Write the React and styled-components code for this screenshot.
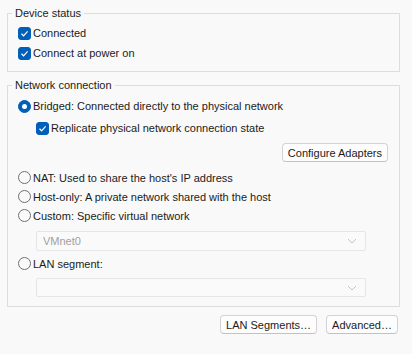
import React, { useState } from "react";
import styled, { createGlobalStyle } from "styled-components";

const Global = createGlobalStyle`
  body {
    margin: 0;
    background: #f9f9f9;
    font-family: "Liberation Sans", Arial, sans-serif;
    font-size: 11px;
    color: #1b1b1b;
  }
`;

const Page = styled.div`
  width: 412px;
  height: 354px;
  box-sizing: border-box;
  padding: 5px 12px 0 7px;
  display: flex;
  flex-direction: column;
`;

const Group = styled.fieldset`
  margin: ${p => p.$top || 0}px 0 0 0;
  border: 1px solid #dddddd;
  border-radius: 0;
  padding: ${p => p.$pad};
  display: flex;
  flex-direction: column;
  min-width: 0;
`;

const Legend = styled.legend`
  padding: 0 3px;
  margin-left: -6px;
  line-height: 16px;
  color: #1b1b1b;
`;

const Row = styled.label`
  display: flex;
  align-items: center;
  gap: 2px;
  height: ${p => p.$h || 20}px;
  margin-top: ${p => p.$mt || 0}px;
  margin-left: ${p => p.$indent || 0}px;
  line-height: 16px;
  white-space: nowrap;
`;

const Box = styled.span`
  width: 13px;
  height: 13px;
  box-sizing: border-box;
  border-radius: 3px;
  background: ${p => (p.$on ? "#005fb8" : "#fdfdfd")};
  border: 1px solid ${p => (p.$on ? "#005fb8" : "#767676")};
  display: flex;
  align-items: center;
  justify-content: center;
  flex: none;
`;

const Radio = styled.span`
  width: 13px;
  height: 13px;
  box-sizing: border-box;
  border-radius: 50%;
  flex: none;
  background: ${p => (p.$on ? "#005fb8" : "transparent")};
  border: 1px solid ${p => (p.$on ? "#005fb8" : "#6f6f6f")};
  display: flex;
  align-items: center;
  justify-content: center;

  &::after {
    content: "";
    display: ${p => (p.$on ? "block" : "none")};
    width: 5px;
    height: 5px;
    border-radius: 50%;
    background: #ffffff;
  }
`;

const ButtonRow = styled.div`
  display: flex;
  justify-content: flex-end;
  gap: ${p => p.$gap || 0}px;
  margin-top: ${p => p.$mt || 0}px;
  margin-right: ${p => p.$mr || 0}px;
`;

const Button = styled.button`
  height: 19px;
  box-sizing: border-box;
  padding: 0 5px;
  border: 1px solid #d3d3d3;
  border-bottom-color: #c2c2c2;
  border-radius: 4px;
  background: #fdfdfd;
  font-family: inherit;
  font-size: 11px;
  color: #1b1b1b;
  line-height: 16px;
  cursor: pointer;
`;

const Select = styled.div`
  height: ${p => p.$h || 20}px;
  box-sizing: border-box;
  margin: ${p => p.$mt || 0}px 22px 0 18px;
  border: 1px solid #e6e6e6;
  border-radius: 2px;
  background: #fafafa;
  display: flex;
  align-items: center;
  justify-content: space-between;
  padding: 0 8px 0 6px;
  color: #a0a0a0;
`;

function Check() {
  return (
    <svg width="9" height="9" viewBox="0 0 9 9">
      <path d="M1.5 4.8 L3.6 6.8 L7.6 2.3" fill="none" stroke="#fff" strokeWidth="1.2" />
    </svg>
  );
}

function Chevron() {
  return (
    <svg width="10" height="6" viewBox="0 0 10 6">
      <path d="M1 1 L5 5 L9 1" fill="none" stroke="#c4c4c4" strokeWidth="1" />
    </svg>
  );
}

function CheckRow({ on, children, ...rest }) {
  return (
    <Row {...rest}>
      <Box $on={on}>{on && <Check />}</Box>
      {children}
    </Row>
  );
}

function RadioRow({ on, onPick, children, ...rest }) {
  return (
    <Row {...rest} onClick={onPick}>
      <Radio $on={on} />
      {children}
    </Row>
  );
}

export default function App() {
  const [mode, setMode] = useState("bridged");

  return (
    <Page>
      <Global />
      <Group $pad="2px 10px 8px 10px">
        <Legend>Device status</Legend>
        <CheckRow on>Connected</CheckRow>
        <CheckRow on>Connect at power on</CheckRow>
      </Group>

      <Group $top={5} $pad="3px 11px 9px 10px">
        <Legend>Network connection</Legend>
        <RadioRow on={mode === "bridged"} onPick={() => setMode("bridged")}>
          Bridged: Connected directly to the physical network
        </RadioRow>
        <CheckRow on $mt={2} $indent={18}>
          Replicate physical network connection state
        </CheckRow>
        <ButtonRow $mt={5}>
          <Button>Configure Adapters</Button>
        </ButtonRow>
        <RadioRow $h={19} $mt={6} on={mode === "nat"} onPick={() => setMode("nat")}>
          NAT: Used to share the host's IP address
        </RadioRow>
        <RadioRow $h={19} on={mode === "host"} onPick={() => setMode("host")}>
          Host-only: A private network shared with the host
        </RadioRow>
        <RadioRow $h={19} on={mode === "custom"} onPick={() => setMode("custom")}>
          Custom: Specific virtual network
        </RadioRow>
        <Select $mt={6}>
          <span>VMnet0</span>
          <Chevron />
        </Select>
        <RadioRow $h={19} $mt={3} on={mode === "lan"} onPick={() => setMode("lan")}>
          LAN segment:
        </RadioRow>
        <Select $mt={5} $h={19}>
          <span />
          <Chevron />
        </Select>
      </Group>

      <ButtonRow $mt={8} $mr={2} $gap={9}>
        <Button>LAN Segments…</Button>
        <Button>Advanced…</Button>
      </ButtonRow>
    </Page>
  );
}
